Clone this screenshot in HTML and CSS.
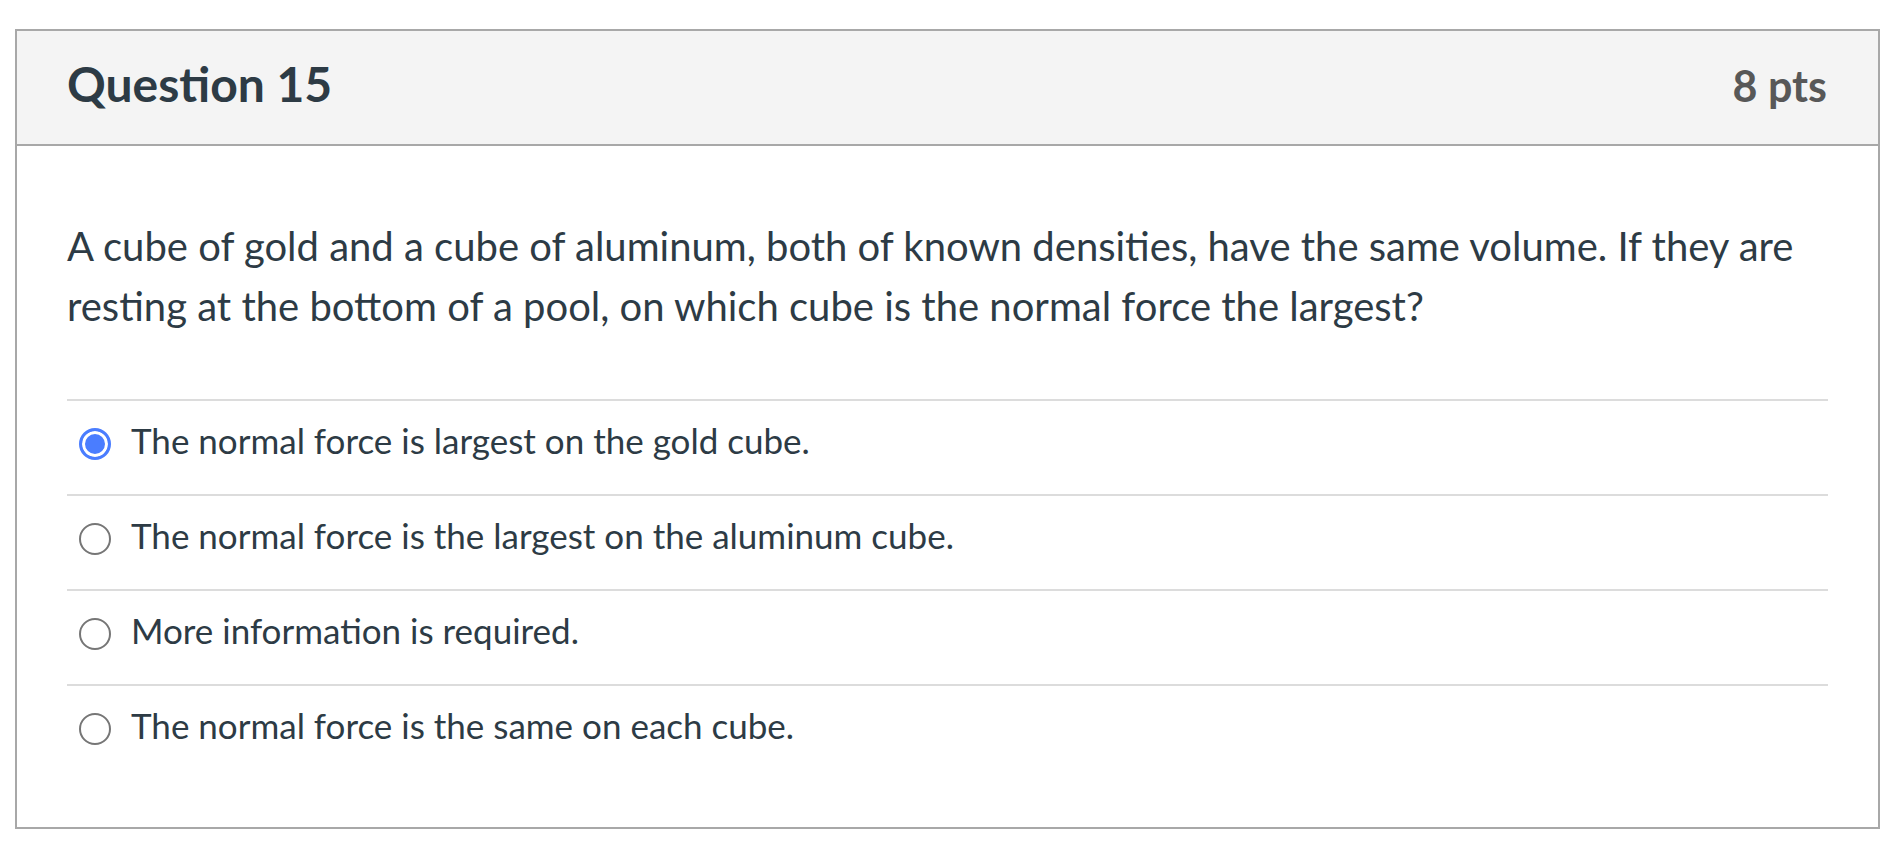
FILE: index.html
```html
<!DOCTYPE html>
<html lang="en">
<head>
<meta charset="utf-8">
<title>Question 15</title>
<link rel="stylesheet" href="styles.css">
</head>
<body>
<div class="question">
  <div class="question-header">
    <span class="question-name">Question 15</span>
    <span class="question-points">8 pts</span>
  </div>
  <div class="question-body">
    <p class="question-text">A cube of gold and a cube of aluminum, both of known densities, have the same volume. If they are resting at the bottom of a pool, on which cube is the normal force the largest?</p>
    <div class="answers">
      <div class="answer">
        <span class="radio checked"></span>
        <span class="answer-text">The normal force is largest on the gold cube.</span>
      </div>
      <div class="answer">
        <span class="radio"></span>
        <span class="answer-text">The normal force is the largest on the aluminum cube.</span>
      </div>
      <div class="answer">
        <span class="radio"></span>
        <span class="answer-text">More information is required.</span>
      </div>
      <div class="answer">
        <span class="radio"></span>
        <span class="answer-text">The normal force is the same on each cube.</span>
      </div>
    </div>
  </div>
</div>
</body>
</html>
```
FILE: styles.css
```css
html, body {
  margin: 0;
  padding: 0;
  background: #ffffff;
}

body {
  font-family: Lato, "Open Sans", "Liberation Sans", sans-serif;
  color: #2d3b45;
}

.question {
  margin: 29px 13px 0 15px;
  border: 2px solid #a8a8a8;
  background: #ffffff;
}

.question-header {
  box-sizing: border-box;
  height: 115px;
  padding: 24px 51px 0 50px;
  display: flex;
  justify-content: space-between;
  align-items: baseline;
  background: #f4f4f4;
  border-bottom: 2px solid #a8a8a8;
}

.question-name {
  font-size: 48px;
  font-weight: 700;
  color: #2d3b45;
}

.question-points {
  font-size: 43px;
  font-weight: 700;
  color: #585858;
}

.question-body {
  padding: 70px 50px 48px 50px;
}

.question-text {
  margin: 0;
  font-size: 40px;
  line-height: 60px;
}

.answers {
  margin-top: 63px;
}

.answer {
  box-sizing: border-box;
  height: 95px;
  border-top: 2px solid #dcdcdc;
  display: flex;
  align-items: flex-start;
  padding-top: 18px;
}

.radio {
  box-sizing: border-box;
  flex: none;
  width: 32px;
  height: 32px;
  margin: 9px 20px 0 12px;
  border-radius: 50%;
  border: 2px solid #767676;
  background: #ffffff;
}

.radio.checked {
  border: 3px solid #4a7dff;
  background: #4a7dff;
  box-shadow: inset 0 0 0 3px #ffffff;
}

.answer-text {
  font-size: 35px;
  line-height: 42px;
  color: #2d3b45;
}
```
